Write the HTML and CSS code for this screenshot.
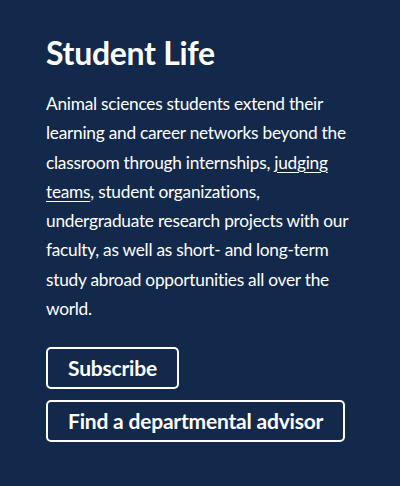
FILE: index.html
```html
<!DOCTYPE html>
<html lang="en">
<head>
<meta charset="utf-8">
<link rel="stylesheet" href="styles.css">
</head>
<body>
<section class="panel">
  <h2 class="title">Student Life</h2>
  <p class="copy">Animal sciences students extend their learning and career networks beyond the classroom through internships, <a href="#" class="link">judging teams</a>, student organizations, undergraduate research projects with our faculty, as well as short- and long-term study abroad opportunities all over the world.</p>
  <div class="actions">
    <a href="#" class="btn">Subscribe</a>
    <a href="#" class="btn">Find a departmental advisor</a>
  </div>
</section>
</body>
</html>
```
FILE: styles.css
```css
html, body {
  margin: 0;
  padding: 0;
  background: #13294b;
}
.panel {
  width: 400px;
  height: 486px;
  box-sizing: border-box;
  padding: 33px 46px 0 46px;
  background: #13294b;
  color: #ffffff;
  font-family: Lato, "Noto Sans", sans-serif;
}
.title {
  margin: 0 0 16px 0;
  font-size: 32px;
  line-height: 40px;
  font-weight: 700;
  letter-spacing: -0.3px;
}
.copy {
  margin: 0 0 24px 0;
  width: 310px;
  font-size: 17.3px;
  line-height: 29.3px;
  letter-spacing: -0.25px;
}
.link {
  color: #ffffff;
  text-decoration: underline;
  text-underline-offset: 3px;
}
.actions {
  display: flex;
  flex-direction: column;
  align-items: flex-start;
  gap: 11px;
}
.btn {
  display: inline-block;
  box-sizing: border-box;
  height: 42px;
  padding: 0 20px;
  border: 2px solid #ffffff;
  border-radius: 5px;
  color: #ffffff;
  text-decoration: none;
  font-size: 21px;
  font-weight: 700;
  line-height: 38px;
  letter-spacing: -0.2px;
}
```
